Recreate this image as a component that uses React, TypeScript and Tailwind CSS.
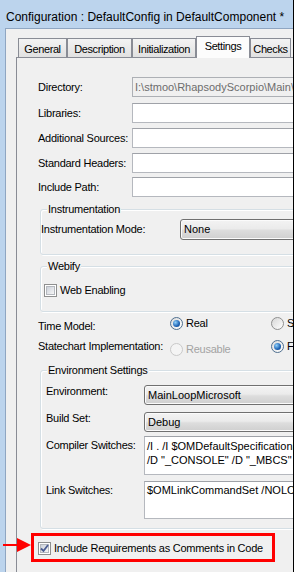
import React from 'react';

const lbl = 'whitespace-nowrap text-[11px] leading-[13px] tracking-[-0.25px] text-black';
const tabBase =
  'flex shrink-0 items-center justify-center whitespace-nowrap border border-b-0 border-[#898c95] text-[11px] tracking-[-0.4px]';
const tabIdle = `${tabBase} h-[19px] bg-[linear-gradient(#f3f3f3,#e1e1e1)] pt-[3px]`;
const group =
  'w-[340px] rounded-[3px] border border-[#d5dfe5] shadow-[1px_1px_0_#ffffff,inset_1px_1px_0_#ffffff]';
const legend =
  'ml-[6px] h-[13px] bg-[#f0f0f0] px-[1px] text-[11px] leading-[13px] tracking-[-0.25px]';
const edit = 'h-[20px] w-[250px] shrink-0 border border-[#b5b8be] border-t-[#9fa2a8] bg-white';

function Radio({ checked = false, disabled = false }: { checked?: boolean; disabled?: boolean }) {
  return (
    <span
      className={[
        'flex h-[13px] w-[13px] shrink-0 items-center justify-center rounded-full border',
        disabled
          ? 'border-[#c9c9c9] bg-[#f4f4f4]'
          : checked
            ? 'border-[#4f6f8f] bg-[linear-gradient(135deg,#dcdcdc,#ffffff)]'
            : 'border-[#8e8f8f] bg-[linear-gradient(135deg,#d6d6d6,#ffffff)]',
      ].join(' ')}
    >
      {checked && (
        <span className="h-[7px] w-[7px] rounded-full bg-[radial-gradient(circle_at_35%_35%,#8fd0fa,#1d63b5_60%,#0c3d7d)]" />
      )}
    </span>
  );
}

function Check({ checked = false }: { checked?: boolean }) {
  return (
    <span className="flex h-[13px] w-[13px] shrink-0 border border-[#8e8f8f] bg-white p-[1px]">
      <span className="flex h-full w-full items-center justify-center border border-[#b4b8be] bg-[linear-gradient(135deg,#ccd1da,#f6f6f6)]">
        {checked && (
          <svg width="9" height="9" viewBox="0 0 9 9" className="overflow-visible">
            <path d="M1 4.5 L3.5 7 L8 1" fill="none" stroke="#4a5c92" strokeWidth="1.8" />
          </svg>
        )}
      </span>
    </span>
  );
}

function Combo({ value, width }: { value: string; width: string }) {
  return (
    <div
      className={`flex h-[20px] shrink-0 items-center whitespace-nowrap rounded-[3px] border border-[#707070] bg-[linear-gradient(#f3f3f3_0%,#ebebeb_45%,#dddddd_55%,#cfcfcf_100%)] pl-[3px] text-[11px] shadow-[inset_0_0_0_1px_#fbfbfb] ${width}`}
    >
      {value}
    </div>
  );
}

function PathRow({ label, value, disabled, className = '' }: { label: string; value?: string; disabled?: boolean; className?: string }) {
  return (
    <div className={`flex h-[20px] items-center ${className}`}>
      <span className={`${lbl} w-[94px] shrink-0`}>{label}</span>
      <div
        className={
          disabled
            ? 'flex h-[20px] w-[250px] shrink-0 items-center whitespace-nowrap border border-[#adb0b5] bg-[#f0f0f0] pl-[2px] text-[11px] text-[#6d6d6d]'
            : edit
        }
      >
        {value}
      </div>
    </div>
  );
}

export default function App() {
  return (
    <div className="relative flex h-[572px] w-[296px] overflow-hidden bg-white font-['Liberation_Sans',Arial,sans-serif] text-black">
      <div className="flex w-[293px] shrink-0 flex-col overflow-hidden bg-[#bcd4ed]">
        {/* title */}
        <div className="flex h-[28px] shrink-0 items-center whitespace-nowrap pl-[6px] pt-[5px] text-[12px]">
          Configuration : DefaultConfig in DefaultComponent *
        </div>

        <div className="ml-[5px] flex flex-1 flex-col border-l border-t border-[#8fa6c2] bg-[#f0f0f0] pl-[10px] pt-[7px]">
          {/* tabs */}
          <div className="flex h-[21px] items-end pl-[2px]">
            <div className={`${tabIdle} w-[49px]`}>General</div>
            <div className={`${tabIdle} w-[65px]`}>Description</div>
            <div className={`${tabIdle} w-[64px]`}>Initialization</div>
            <div className={`${tabBase} relative z-10 -mb-px h-[22px] w-[54px] bg-[#fcfcfc] pb-[2px]`}>Settings</div>
            <div className={`${tabIdle} w-[41px]`}>Checks</div>
          </div>

          {/* page */}
          <div className="flex w-[420px] flex-1 flex-col border-l border-t border-[#898c95]">
            <div className="ml-[21px] mt-[19px] flex flex-col">
              <PathRow label="Directory:" value={'I:\\stmoo\\RhapsodyScorpio\\Main\\Model'} disabled />
              <PathRow label="Libraries:" className="mt-[6px]" />
              <PathRow label="Additional Sources:" className="mt-[5px]" />
              <PathRow label="Standard Headers:" className="mt-[5px]" />
              <PathRow label="Include Path:" className="mt-[4px]" />
            </div>

            <fieldset className={`${group} ml-[23px] mt-[6px] pb-[14px]`}>
              <legend className={legend}>Instrumentation</legend>
              <div className="mt-[3px] flex items-center">
                <span className={`${lbl} w-[139px] shrink-0`}>Instrumentation Mode:</span>
                <div className="h-[21px]">
                  <Combo value="None" width="h-[21px] w-[200px]" />
                </div>
              </div>
            </fieldset>

            <fieldset className={`${group} ml-[23px] mt-[5px] pb-[13px]`}>
              <legend className={legend}>Webify</legend>
              <div className="mt-[10px] flex h-[15px] items-center gap-[3px] pl-[3px]">
                <Check />
                <span className={lbl}>Web Enabling</span>
              </div>
            </fieldset>

            <div className="ml-[21px] mt-[5px] flex items-start">
              <span className={`${lbl} mt-[3px] w-[132px] shrink-0`}>Time Model:</span>
              <div className="flex w-[101px] shrink-0 items-center gap-[3px]">
                <Radio checked />
                <span className={lbl}>Real</span>
              </div>
              <div className="flex items-center gap-[3px]">
                <Radio />
                <span className={lbl}>Simulated</span>
              </div>
            </div>

            <div className="ml-[21px] mt-[7px] flex items-start">
              <span className={`${lbl} w-[132px] shrink-0`}>Statechart Implementation:</span>
              <div className="mt-[3px] flex w-[101px] shrink-0 items-center gap-[3px]">
                <Radio disabled />
                <span className={`${lbl} !text-[#a3a3a3]`}>Reusable</span>
              </div>
              <div className="flex items-center gap-[3px]">
                <Radio checked />
                <span className={lbl}>Flat</span>
              </div>
            </div>

            <fieldset className={`${group} ml-[23px] mt-[8px] pb-[9px] pl-[5px]`}>
              <legend className={`${legend} !ml-px`}>Environment Settings</legend>
              <div className="mt-[8px] flex items-start">
                <span className={`${lbl} w-[98px] shrink-0`}>Environment:</span>
                <Combo value="MainLoopMicrosoft" width="w-[220px]" />
              </div>
              <div className="mt-[7px] flex items-start">
                <span className={`${lbl} w-[98px] shrink-0`}>Build Set:</span>
                <Combo value="Debug" width="w-[220px]" />
              </div>
              <div className="mt-[4px] flex items-start">
                <span className={`${lbl} mt-[3px] w-[98px] shrink-0`}>Compiler Switches:</span>
                <div className="h-[39px] w-[220px] shrink-0 overflow-hidden whitespace-pre border border-[#b5b8be] border-t-[#9fa2a8] bg-white pl-[2px] pt-[2px] text-[11px] leading-[14px]">
                  {'/I . /I $OMDefaultSpecificationDirectory\n/D "_CONSOLE" /D "_MBCS" /D "WIN32"'}
                </div>
              </div>
              <div className="mt-[6px] flex items-start">
                <span className={`${lbl} mt-[3px] w-[98px] shrink-0`}>Link Switches:</span>
                <div className="h-[38px] w-[220px] shrink-0 overflow-hidden whitespace-pre border border-[#b5b8be] border-t-[#9fa2a8] bg-white pl-[2px] pt-[1px] text-[11px] leading-[14px]">
                  $OMLinkCommandSet /NOLOGO
                </div>
              </div>
            </fieldset>

            <div className="ml-[14px] mt-[4px] flex h-[29px] w-[244px] items-center gap-[3px] border-[3px] border-[#ff0000] pl-[4px] pt-px">
              <Check checked />
              <span className={lbl}>Include Requirements as Comments in Code</span>
            </div>
          </div>
        </div>
      </div>
      <div className="w-px shrink-0 bg-black" />

      {/* annotation arrow */}
      <svg className="absolute left-0 top-[538px]" width="32" height="16" viewBox="0 0 32 16">
        <rect x="3" y="6" width="16" height="2" fill="#ff0000" />
        <polygon points="17,0 31,7 17,14" fill="#ff0000" />
      </svg>
    </div>
  );
}
